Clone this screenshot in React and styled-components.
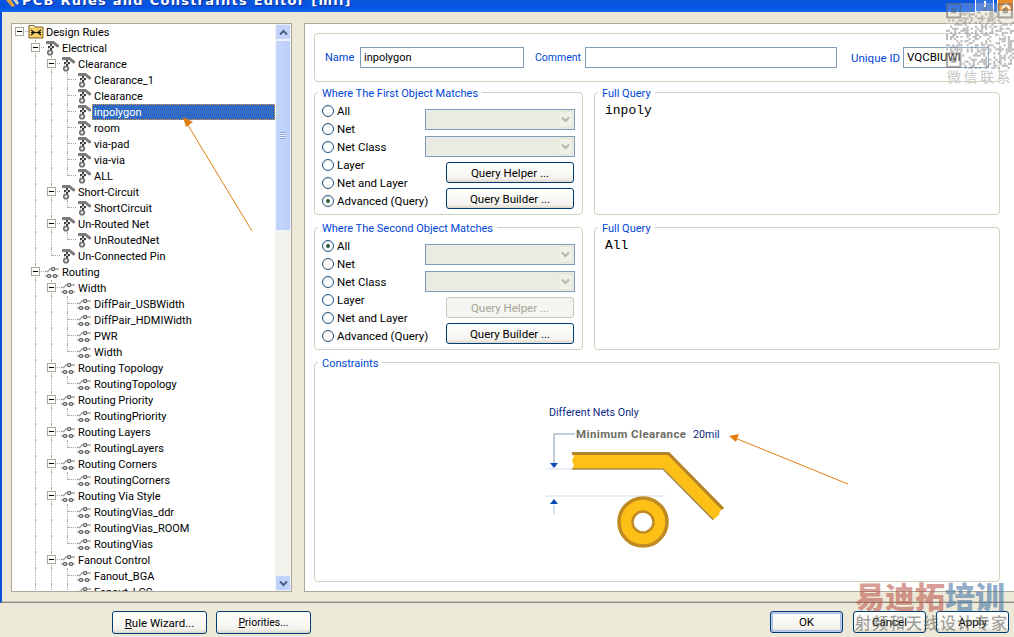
import React from "react";
import styled, { createGlobalStyle } from "styled-components";

const GlobalStyle = createGlobalStyle`
  html, body {
    margin: 0;
    padding: 0;
    background: #ece9d8;
  }
  body {
    width: 1014px;
    height: 637px;
    overflow: hidden;
    font-family: Roboto, "Liberation Sans", Arial, sans-serif;
    font-size: 12px;
    color: #000;
  }
`;

const TREE = [
  { label: "Design Rules", icon: "folder", children: [
    { label: "Electrical", icon: "rule", children: [
      { label: "Clearance", icon: "rule", children: [
        { label: "Clearance_1", icon: "rule" },
        { label: "Clearance", icon: "rule" },
        { label: "inpolygon", icon: "rule", selected: true },
        { label: "room", icon: "rule" },
        { label: "via-pad", icon: "rule" },
        { label: "via-via", icon: "rule" },
        { label: "ALL", icon: "rule" },
      ]},
      { label: "Short-Circuit", icon: "rule", children: [{ label: "ShortCircuit", icon: "rule" }] },
      { label: "Un-Routed Net", icon: "rule", children: [{ label: "UnRoutedNet", icon: "rule" }] },
      { label: "Un-Connected Pin", icon: "rule" },
    ]},
    { label: "Routing", icon: "route", more: true, children: [
      { label: "Width", icon: "route", children: [
        { label: "DiffPair_USBWidth", icon: "route" },
        { label: "DiffPair_HDMIWidth", icon: "route" },
        { label: "PWR", icon: "route" },
        { label: "Width", icon: "route" },
      ]},
      { label: "Routing Topology", icon: "route", children: [{ label: "RoutingTopology", icon: "route" }] },
      { label: "Routing Priority", icon: "route", children: [{ label: "RoutingPriority", icon: "route" }] },
      { label: "Routing Layers", icon: "route", children: [{ label: "RoutingLayers", icon: "route" }] },
      { label: "Routing Corners", icon: "route", children: [{ label: "RoutingCorners", icon: "route" }] },
      { label: "Routing Via Style", icon: "route", children: [
        { label: "RoutingVias_ddr", icon: "route" },
        { label: "RoutingVias_ROOM", icon: "route" },
        { label: "RoutingVias", icon: "route" },
      ]},
      { label: "Fanout Control", icon: "route", more: true, children: [
        { label: "Fanout_BGA", icon: "route" },
        { label: "Fanout_LCC", icon: "route", more: true },
      ]},
    ]},
  ]},
];

// turns the nested rules into rows, remembering which guide lines run through each row
function flatten(nodes, guides = [], out = []) {
  nodes.forEach((node, i) => {
    const hasNext = i < nodes.length - 1 || node.more;
    out.push({ ...node, guides, hasNext, level: guides.length });
    if (node.children) flatten(node.children, [...guides, hasNext], out);
  });
  return out;
}

const ROWS = flatten(TREE);

const OBJECT_OPTIONS = ["All", "Net", "Net Class", "Layer", "Net and Layer", "Advanced (Query)"];

// fixed pseudo random cells for the QR watermark
const QR_CELLS = [];
let seed = 17;
for (let y = 0; y < 32; y++) {
  for (let x = 0; x < 33; x++) {
    seed = (seed * 137 + 71) % 1009;
    const corner = (x < 8 && y < 8) || (x > 24 && y < 8) || (x < 8 && y > 23);
    if (!corner && seed % 5 < 2) QR_CELLS.push([x, y]);
  }
}

const Page = styled.div`
  position: relative;
  width: 1014px;
  height: 637px;
  overflow: hidden;
  background: #ece9d8;
  display: flex;
  flex-direction: column;
`;

const TitleBar = styled.div`
  height: 12px;
  flex: none;
  display: flex;
  align-items: flex-start;
  overflow: hidden;
  background: linear-gradient(#0a56dc, #0854e2 60%, #0a66f4);
`;

const TitleIcon = styled.svg`
  width: 16px;
  height: 12px;
  margin-left: 5px;
  flex: none;
`;

const TitleText = styled.span`
  flex: 1;
  margin: -7px 0 0 1px;
  color: #fff;
  font-family: "DejaVu Sans", sans-serif;
  font-weight: 700;
  font-size: 13px;
  line-height: 15px;
  letter-spacing: 1.25px;
  white-space: nowrap;
  text-shadow: 1px 1px 0 #0a2f9c;
`;

const CaptionButton = styled.span`
  width: ${p => p.$w}px;
  height: 12px;
  margin-left: ${p => p.$gap}px;
  flex: none;
  display: flex;
  align-items: center;
  justify-content: center;
  background: ${p => p.$bg};
  border: 1px solid #fff;
  border-top: 0;
  box-sizing: border-box;
`;

const Body = styled.div`
  flex: none;
  height: 591px;
  box-sizing: border-box;
  border-left: 2px solid #0a4fdc;
  border-bottom: 1px solid #8b8a80;
  box-shadow: inset 0 -1px 0 #c9c6b5;
  padding: 11px 0 10px 9px;
  display: flex;
  gap: 12px;
`;

const TreePanel = styled.div`
  width: 281px;
  flex: none;
  box-sizing: border-box;
  border: 1px solid #aca899;
  background: #fff;
  display: flex;
  overflow: hidden;
`;

const TreeList = styled.div`
  flex: 1;
  overflow: hidden;
`;

const Row = styled.div`
  height: 16px;
  display: flex;
  align-items: center;
  white-space: nowrap;
`;

const Guide = styled.span`
  position: relative;
  width: 16px;
  height: 16px;
  flex: none;
  &::before {
    content: "";
    position: absolute;
    left: 7px;
    top: 0;
    bottom: ${p => (p.$half ? "8px" : "0")};
    border-left: ${p => (p.$on ? "1px dotted #a5a5a0" : "0")};
  }
  &::after {
    content: "";
    position: absolute;
    left: 8px;
    width: 8px;
    top: 7px;
    border-top: ${p => (p.$tick ? "1px dotted #a5a5a0" : "0")};
  }
`;

const Expander = styled.span`
  position: absolute;
  left: 3px;
  top: 3px;
  width: 9px;
  height: 9px;
  box-sizing: border-box;
  border: 1px solid #aca899;
  background: #fff;
  z-index: 1;
  &::after {
    content: "";
    position: absolute;
    left: 1px;
    right: 1px;
    top: 3px;
    height: 1px;
    background: #000;
  }
`;

const NodeIcon = styled.svg`
  width: 16px;
  height: 16px;
  flex: none;
`;

const NodeLabel = styled.span`
  margin-left: ${p => (p.$selected ? "0" : "2px")};
  padding: 0 ${p => (p.$selected ? "2px" : "0")};
  height: 16px;
  line-height: 18px;
  font-size: 11px;
  color: ${p => (p.$selected ? "#fff" : "#000")};
  background: ${p => (p.$selected ? "#316ac5" : "transparent")};
  outline: ${p => (p.$selected ? "1px dotted #e0a040" : "0")};
  outline-offset: -1px;
  flex: ${p => (p.$selected ? "1" : "none")};
`;

const Scrollbar = styled.div`
  width: 16px;
  flex: none;
  display: flex;
  flex-direction: column;
  background: #f2f1ec;
`;

const ScrollButton = styled.div`
  height: 16px;
  flex: none;
  box-sizing: border-box;
  border: 1px solid #eef2fd;
  border-radius: 2px;
  background: #c1d3fb;
  display: flex;
  align-items: center;
  justify-content: center;
`;

const ScrollThumb = styled.div`
  height: 191px;
  flex: none;
  box-sizing: border-box;
  border: 1px solid #eef2fd;
  border-radius: 2px;
  background: linear-gradient(90deg, #c5d6fc, #bccffa);
  display: flex;
  align-items: center;
  justify-content: center;
`;

const ScrollGrip = styled.span`
  width: 6px;
  height: 7px;
  background: repeating-linear-gradient(#8ea5d8 0 1px, #edf2fe 1px 2px);
`;

const ScrollSpace = styled.div`
  flex: 1;
`;

const RulePanel = styled.div`
  flex: 1;
  min-width: 0;
  box-sizing: border-box;
  margin-right: -30px;
  border: 1px solid #aca899;
  background: #fff;
  padding: 9px 0 9px 9px;
  display: grid;
  grid-template-columns: 269px 406px;
  grid-template-rows: 48px 123px 123px 220px;
  column-gap: 11px;
  row-gap: 12px;
  align-content: start;
`;

const NameCard = styled.div`
  grid-column: 1 / 3;
  box-sizing: border-box;
  margin-bottom: -1px;
  border: 1px solid #d0d0bf;
  border-radius: 4px;
  display: flex;
  align-items: center;
  padding: 0 0 0 10px;
`;

const BlueLabel = styled.label`
  width: ${p => p.$w}px;
  flex: none;
  color: #0046d5;
  font-size: ${p => p.$size}px;
  line-height: 14px;
  white-space: nowrap;
  margin-left: ${p => p.$gap || 0}px;
`;

const TextField = styled.div`
  width: ${p => p.$w}px;
  height: 21px;
  flex: none;
  box-sizing: border-box;
  border: 1px solid #7f9db9;
  padding-left: 3px;
  line-height: 19px;
  font-size: ${p => p.$size || 11}px;
`;

const Group = styled.fieldset`
  grid-column: ${p => p.$span || "auto"};
  margin: -1px 0 1px;
  min-width: 0;
  box-sizing: border-box;
  border: 1px solid #d0d0bf;
  border-radius: 4px;
  padding: 0;
  position: relative;
`;

const Legend = styled.legend`
  position: absolute;
  top: -6px;
  left: 3px;
  padding: 0 4px;
  background: #fff;
  color: #0046d5;
  font-size: 11px;
  line-height: 14px;
  white-space: nowrap;
`;

const ObjectGrid = styled.div`
  height: 100%;
  box-sizing: border-box;
  padding: 9px 8px 0 7px;
  display: grid;
  grid-template-columns: 103px 150px;
`;

const RadioList = styled.div`
  display: flex;
  flex-direction: column;
`;

const RadioRow = styled.div`
  height: 18px;
  display: flex;
  align-items: center;
  gap: 3px;
  font-size: 11.5px;
  white-space: nowrap;
`;

const RadioDot = styled.span`
  width: 12px;
  height: 12px;
  flex: none;
  box-sizing: border-box;
  border: 1px solid #1c5180;
  border-radius: 50%;
  background: radial-gradient(circle at 60% 60%, #fff 50%, #dcdcd2);
  display: flex;
  align-items: center;
  justify-content: center;
  &::after {
    content: "";
    width: 4px;
    height: 4px;
    border-radius: 50%;
    background: ${p => (p.$checked ? "#2d5a3d" : "transparent")};
  }
`;

const Controls = styled.div`
  display: flex;
  flex-direction: column;
  align-items: flex-end;
  margin-top: 7px;
`;

const DisabledSelect = styled.div`
  width: 150px;
  height: 21px;
  flex: none;
  box-sizing: border-box;
  border: 1px solid #7f9db9;
  background: #ebebe4;
  margin-bottom: 5px;
  padding: 1px;
  display: flex;
  justify-content: flex-end;
  & + & {
    margin-top: 1px;
  }
`;

const SelectArrow = styled.span`
  width: 15px;
  height: 17px;
  box-sizing: border-box;
  border: 1px solid #e4e3d8;
  border-radius: 2px;
  background: #f0efe8;
  display: flex;
  align-items: center;
  justify-content: center;
`;

const Button = styled.div`
  width: ${p => p.$w}px;
  height: ${p => p.$h || 21}px;
  flex: none;
  box-sizing: border-box;
  border: 1px solid ${p => (p.$disabled ? "#c9c7ba" : "#003c74")};
  ${p => p.$strong && "box-shadow: inset 0 0 0 1px #c0d0ee, inset 0 0 0 2px #a8bce4;"}
  border-radius: 3px;
  background: ${p => (p.$disabled ? "#f4f4f0" : "linear-gradient(#fff, #f4f3ee 80%, #dcd8ca)")};
  color: ${p => (p.$disabled ? "#a5a597" : "#000")};
  display: flex;
  align-items: center;
  justify-content: center;
  font-size: ${p => p.$size || 11.5}px;
  white-space: nowrap;
  u {
    text-underline-offset: 1px;
  }
`;

const HelperButton = styled(Button)`
  margin: 0 1px 5px 0;
`;

const QueryText = styled.div`
  padding: 10px 0 0 10px;
  font-family: "Liberation Mono", monospace;
  font-size: 13px;
  line-height: 15px;
`;

const Canvas = styled.div`
  position: absolute;
  left: 0;
  top: 0;
  width: 100%;
  height: 100%;
`;

const DiagramText = styled.span`
  position: absolute;
  left: ${p => p.$x}px;
  top: ${p => p.$y}px;
  color: ${p => p.$color || "#0a2a82"};
  font-size: ${p => (p.$bold ? 11.5 : 10.7)}px;
  font-weight: ${p => (p.$bold ? 700 : 400)};
  letter-spacing: ${p => (p.$bold ? "0.4px" : "0")};
  line-height: 14px;
  white-space: nowrap;
`;

const DiagramArt = styled.svg`
  position: absolute;
  left: 224px;
  top: 60px;
  width: 200px;
  height: 130px;
`;

const Footer = styled.div`
  flex: 1;
  display: flex;
  padding: 8px 5px 0 112px;
`;

const FooterLeft = styled.div`
  display: flex;
  gap: 9px;
  flex: 1;
`;

const FooterRight = styled.div`
  display: flex;
  gap: 10px;
`;

const Overlay = styled.svg`
  position: absolute;
  left: 0;
  top: 0;
  width: 1014px;
  height: 637px;
  pointer-events: none;
`;

const QrMark = styled.svg`
  position: absolute;
  left: 946px;
  top: 3px;
  width: 68px;
  height: 66px;
  opacity: 0.6;
`;

const QrCaption = styled.span`
  position: absolute;
  left: 947px;
  top: 68px;
  font-family: "Noto Sans CJK SC", sans-serif;
  font-size: 14px;
  line-height: 17px;
  letter-spacing: 2.5px;
  color: #c8c8c4;
  white-space: nowrap;
`;

const BrandMark = styled.div`
  position: absolute;
  left: 855px;
  top: 576px;
  font-family: "Noto Sans CJK SC", sans-serif;
  font-weight: 900;
  font-size: 30px;
  line-height: 38px;
  white-space: nowrap;
  color: rgba(190, 90, 80, 0.6);
  span {
    color: rgba(80, 125, 170, 0.65);
  }
`;

const BrandSlogan = styled.div`
  position: absolute;
  left: 855px;
  top: 611px;
  font-family: "Noto Sans CJK SC", sans-serif;
  font-weight: 500;
  font-size: 16px;
  line-height: 22px;
  letter-spacing: 1px;
  white-space: nowrap;
  color: rgba(100, 100, 90, 0.6);
`;

function RuleIcon() {
  return (
    <NodeIcon viewBox="0 0 16 16">
      <path d="M2 1h7.5L15 5v2l-2 .5L9 4H2z" fill="#7b7b7b" />
      <path d="M6 4h2v2H6zM4 6h2v2H4zM8 6h2v2H8zM6 8h2v2H6z" fill="#3c3c3c" />
      <path d="M6 6h2v2H6zM4 8h1v1H4zM8 8h1v1H8z" fill="#c8c8c8" />
      <circle cx="6" cy="12.500" r="2.200" fill="#fff" stroke="#737373" strokeWidth="1.800" />
    </NodeIcon>
  );
}

function RouteIcon() {
  return (
    <NodeIcon viewBox="0 0 16 16">
      <path d="M1 7.500h3l2-2.500h9" fill="none" stroke="#a5a5a5" strokeWidth="1.300" />
      <path d="M1 12h14" stroke="#a5a5a5" strokeWidth="1.300" />
      <circle cx="9" cy="5" r="1.600" fill="#e8e8e8" stroke="#6a6a6a" strokeWidth="1.300" />
      <circle cx="5" cy="12" r="1.600" fill="#e8e8e8" stroke="#6a6a6a" strokeWidth="1.300" />
      <circle cx="11" cy="12" r="1.600" fill="#e8e8e8" stroke="#6a6a6a" strokeWidth="1.300" />
    </NodeIcon>
  );
}

function FolderIcon() {
  return (
    <NodeIcon viewBox="0 0 16 16">
      <path d="M1 4V1.500h5L7 3h8v11H1z" fill="#f4cf6a" stroke="#7a6226" />
      <path d="M2 2.500h4" stroke="#fff" />
      <path d="M3 6l3.500 2.500L3 11M13 6L9.500 8.500 13 11M3 8.500h10" fill="none" stroke="#111" strokeWidth="1.100" />
    </NodeIcon>
  );
}

const NODE_ICONS = { rule: RuleIcon, route: RouteIcon, folder: FolderIcon };

function Chevron({ up, color = "#4d6185" }) {
  return (
    <svg width="9" height="7" viewBox="0 0 9 7">
      <path d={up ? "M1 5.500l3.500-3.500L8 5.500" : "M1 1.500L4.500 5 8 1.500"} fill="none" stroke={color} strokeWidth="2" />
    </svg>
  );
}

function RuleTree() {
  return (
    <TreePanel>
      <TreeList>
        {ROWS.map((row, i) => {
          const Icon = NODE_ICONS[row.icon];
          return (
            <Row key={i}>
              {row.guides.map((on, g) => (
                <Guide key={g} $on={on} />
              ))}
              <Guide $on={row.level > 0} $half={!row.hasNext} $tick>
                {row.children && <Expander />}
              </Guide>
              <Icon />
              <NodeLabel $selected={row.selected}>{row.label}</NodeLabel>
            </Row>
          );
        })}
      </TreeList>
      <Scrollbar>
        <ScrollButton><Chevron up /></ScrollButton>
        <ScrollThumb><ScrollGrip /></ScrollThumb>
        <ScrollSpace />
        <ScrollButton><Chevron /></ScrollButton>
      </Scrollbar>
    </TreePanel>
  );
}

function ObjectMatches({ title, checked, helperDisabled }) {
  return (
    <Group>
      <Legend>{title}</Legend>
      <ObjectGrid>
        <RadioList>
          {OBJECT_OPTIONS.map(option => (
            <RadioRow key={option}>
              <RadioDot $checked={option === checked} />
              {option}
            </RadioRow>
          ))}
        </RadioList>
        <Controls>
          <DisabledSelect><SelectArrow><Chevron color="#b5b5aa" /></SelectArrow></DisabledSelect>
          <DisabledSelect><SelectArrow><Chevron color="#b5b5aa" /></SelectArrow></DisabledSelect>
          <HelperButton $w={128} $disabled={helperDisabled}>Query Helper ...</HelperButton>
          <HelperButton $w={128}>Query Builder ...</HelperButton>
        </Controls>
      </ObjectGrid>
    </Group>
  );
}

function FullQuery({ text }) {
  return (
    <Group>
      <Legend>Full Query</Legend>
      <QueryText>{text}</QueryText>
    </Group>
  );
}

function ClearanceDiagram() {
  return (
    <Canvas>
      <DiagramText $x={234} $y={43}>Different Nets Only</DiagramText>
      <DiagramText $x={261} $y={64} $bold $color="#6d6d64">Minimum Clearance</DiagramText>
      <DiagramText $x={378} $y={65}>20mil</DiagramText>
      {/* art origin sits at page x 539, y 423 */}
      <DiagramArt viewBox="0 0 200 130">
        <path d="M7 46h26M7 73h119" stroke="#cfdcf0" strokeWidth="1.200" />
        <path d="M36 11H15v29" fill="none" stroke="#7f9db9" />
        <path d="M11 40h8l-4 5z" fill="#0a46b4" />
        <path d="M15 82v9" stroke="#c5d5f0" strokeWidth="1.500" />
        <path d="M11 81h8l-4-5z" fill="#0a46b4" />
        <path d="M33 29H130L185 85L181 88L180 92L174 97L124 46H33L35 42L33 38L35 33Z" fill="#fcc016" />
        <path d="M33 30.500H129.500L184 86" fill="none" stroke="#b5832a" strokeWidth="3" />
        <path d="M33 46H124L174 96.500" fill="none" stroke="#a58a55" strokeWidth="1.500" />
        <circle cx="104" cy="99" r="24" fill="#fcc016" stroke="#c08a22" strokeWidth="3.500" />
        <circle cx="104" cy="99" r="10.500" fill="#fff" stroke="#c08a22" strokeWidth="2.500" />
      </DiagramArt>
    </Canvas>
  );
}

export default function App() {
  return (
    <Page>
      <GlobalStyle />
      <TitleBar>
        <TitleIcon viewBox="0 0 16 12">
          <path d="M1 0l6 7 3-1-4-6z" fill="#e8a040" />
          <path d="M8 0l4 5 2-2-2-3z" fill="#d9d2c0" />
        </TitleIcon>
        <TitleText>PCB Rules and Constraints Editor [mil]</TitleText>
        <CaptionButton $w={19} $gap={0} $bg="#2f6fe0">
          <svg width="8" height="10" viewBox="0 0 8 10"><path d="M4 0v6" stroke="#fff" strokeWidth="2" /></svg>
        </CaptionButton>
        <CaptionButton $w={17} $gap={3} $bg="#e8892a">
          <svg width="10" height="8" viewBox="0 0 10 8"><path d="M1 7l4-5 4 5" fill="none" stroke="#fff" strokeWidth="2" /></svg>
        </CaptionButton>
      </TitleBar>

      <Body>
        <RuleTree />
        <RulePanel>
          <NameCard>
            <BlueLabel $w={35} $size={11}>Name</BlueLabel>
            <TextField $w={164}>inpolygon</TextField>
            <BlueLabel $gap={11} $w={50} $size={10.5}>Comment</BlueLabel>
            <TextField $w={252} />
            <BlueLabel $gap={14} $w={52} $size={11.5}>Unique ID</BlueLabel>
            <TextField $w={86} $size={11.5}>VQCBIUWI</TextField>
          </NameCard>
          <ObjectMatches title="Where The First Object Matches" checked="Advanced (Query)" />
          <FullQuery text="inpoly" />
          <ObjectMatches title="Where The Second Object Matches" checked="All" helperDisabled />
          <FullQuery text="All" />
          <Group $span="1 / 3">
            <Legend>Constraints</Legend>
            <ClearanceDiagram />
          </Group>
        </RulePanel>
      </Body>

      <Footer>
        <FooterLeft>
          <Button $w={95} $h={23}><span><u>R</u>ule Wizard...</span></Button>
          <Button $w={95} $h={23} $size={10.5}><span><u>P</u>riorities...</span></Button>
        </FooterLeft>
        <FooterRight>
          <Button $w={73} $h={22} $strong>OK</Button>
          <Button $w={73} $h={22}>Cancel</Button>
          <Button $w={73} $h={22}>Apply</Button>
        </FooterRight>
      </Footer>

      {/* annotations pasted over the screenshot */}
      <Overlay viewBox="0 0 1014 637">
        <path d="M252 231L186 122" stroke="#e07d10" fill="none" />
        <path d="M183 117l10 5-7 5z" fill="#e07d10" />
        <path d="M848 484L735 438" stroke="#e07d10" fill="none" />
        <path d="M729 436l10-2-3 8z" fill="#e07d10" />
      </Overlay>
      <QrMark viewBox="0 0 66 64">
        <rect width="66" height="64" fill="#fff" opacity="0.35" />
        <g fill="#8f8f8f">
          {QR_CELLS.map(([x, y]) => (
            <rect key={`${x}-${y}`} x={x * 2} y={y * 2} width="2" height="2" />
          ))}
        </g>
        <g fill="none" stroke="#777" strokeWidth="2">
          <rect x="1" y="1" width="13" height="13" />
          <rect x="51" y="1" width="13" height="13" />
          <rect x="1" y="49" width="13" height="13" />
        </g>
        <rect x="5" y="5" width="5" height="5" fill="#777" />
        <rect x="55" y="5" width="5" height="5" fill="#777" />
        <rect x="5" y="53" width="5" height="5" fill="#777" />
      </QrMark>
      <QrCaption>微信联系</QrCaption>
      <BrandMark>易迪拓<span>培训</span></BrandMark>
      <BrandSlogan>射频和天线设计专家</BrandSlogan>
    </Page>
  );
}
